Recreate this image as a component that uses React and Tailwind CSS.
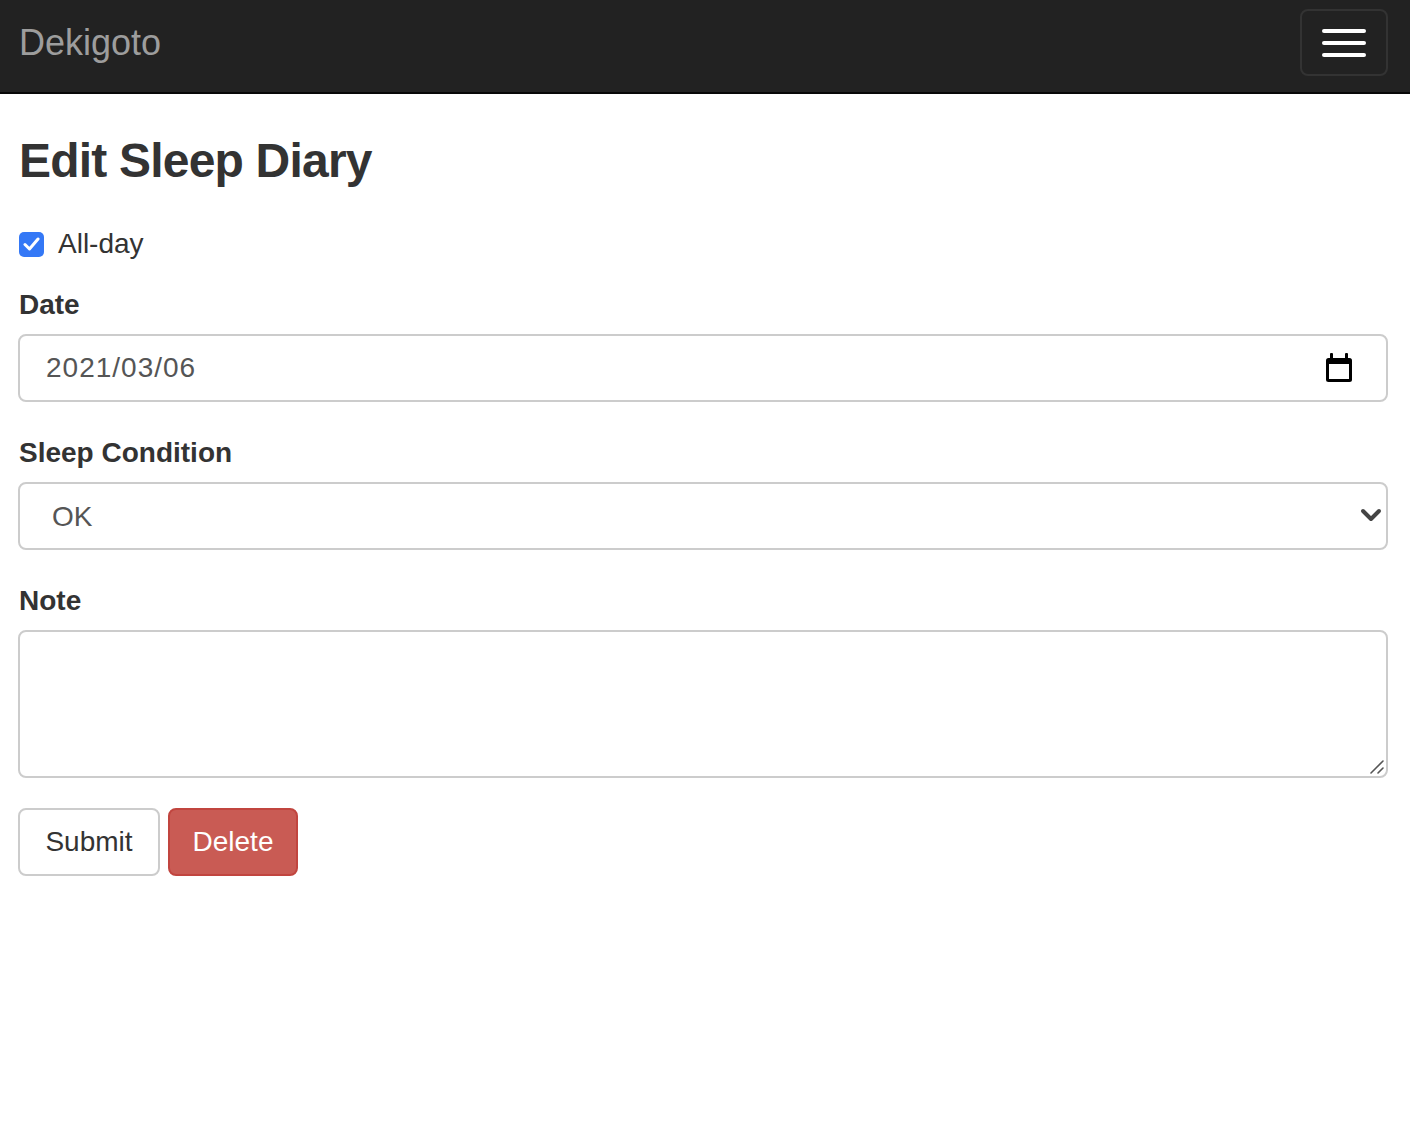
import { useState } from 'react';

const font = { fontFamily: '"Liberation Sans", Arial, Helvetica, sans-serif' };

function CalendarIcon() {
  return (
    <svg width="28" height="30" viewBox="0 0 28 30" className="shrink-0">
      <rect x="1" y="5" width="26" height="24" rx="2.5" fill="#000" />
      <rect x="4" y="11" width="20" height="15" fill="#fff" />
      <rect x="5" y="0" width="3" height="7" rx="1" fill="#000" />
      <rect x="20" y="0" width="3" height="7" rx="1" fill="#000" />
    </svg>
  );
}

function Chevron() {
  return (
    <svg width="22" height="16" viewBox="0 0 22 16">
      <path d="M3 4 L11 12 L19 4" fill="none" stroke="#444" strokeWidth="4" strokeLinecap="round" strokeLinejoin="round" />
    </svg>
  );
}

export default function App() {
  const [allDay, setAllDay] = useState(true);
  const [cond, setCond] = useState('OK');
  const [note, setNote] = useState('');

  return (
    <div className="min-h-[1130px] bg-white text-[#333]" style={font}>
      {/* Navbar */}
      <nav className="h-[94px] bg-[#222] border-b-2 border-[#080808] flex items-center justify-between pl-[19px] pr-[22px]">
        <div className="text-[36px] leading-none text-[#9d9d9d] -mt-[6px]">Dekigoto</div>
        <button className="w-[88px] h-[67px] border-2 border-[#333] rounded-[8px] flex flex-col items-center justify-center gap-[8px] -mt-[7px]">
          <span className="block w-[44px] h-[4px] rounded-[2px] bg-white" />
          <span className="block w-[44px] h-[4px] rounded-[2px] bg-white" />
          <span className="block w-[44px] h-[4px] rounded-[2px] bg-white" />
        </button>
      </nav>

      <div className="pl-[18px] pr-[22px]">
        <h3 className="mt-[40px] mb-[37px] pl-[1px] text-[48px] leading-[53px] font-bold tracking-[-0.8px]">Edit Sleep Diary</h3>

        {/* All-day */}
        <label className="flex items-center h-[40px] text-[28px] leading-[40px] cursor-pointer">
          <span
            onClick={(e) => { e.preventDefault(); setAllDay(v => !v); }}
            className={`ml-[1px] w-[25px] h-[25px] rounded-[5px] flex items-center justify-center ${allDay ? 'bg-[#3478f6]' : 'border-2 border-[#999] bg-white'}`}
          >
            {allDay && (
              <svg width="17" height="14" viewBox="0 0 17 14">
                <path d="M2 7.5 L6.5 12 L15 2" fill="none" stroke="#fff" strokeWidth="3" strokeLinecap="round" strokeLinejoin="round" />
              </svg>
            )}
          </span>
          <span className="ml-[14px]">All-day</span>
        </label>

        {/* Date */}
        <div className="mt-[21px]">
          <div className="pl-[1px] text-[28px] leading-[40px] font-bold mb-[9px]">Date</div>
          <div className="h-[68px] border-2 border-[#ccc] rounded-[8px] flex items-center justify-between pl-[26px] pr-[33px]">
            <span className="text-[28px] text-[#555] tracking-[1px]">2021/03/06</span>
            <CalendarIcon />
          </div>
        </div>

        {/* Sleep Condition */}
        <div className="mt-[31px]">
          <div className="pl-[1px] text-[28px] leading-[40px] font-bold mb-[9px]">Sleep Condition</div>
          <div className="relative">
            <select
              value={cond}
              onChange={e => setCond(e.target.value)}
              className="appearance-none w-full h-[68px] border-2 border-[#ccc] rounded-[8px] bg-white pl-[32px] pt-[2px] text-[28px] text-[#555] outline-none"
              style={font}
            >
              <option>Good</option>
              <option>OK</option>
              <option>Bad</option>
            </select>
            <span className="absolute right-[6px] top-[25px] pointer-events-none">
              <Chevron />
            </span>
          </div>
        </div>

        {/* Note */}
        <div className="mt-[31px]">
          <div className="pl-[1px] text-[28px] leading-[40px] font-bold mb-[9px]">Note</div>
          <div className="relative">
            <textarea
              value={note}
              onChange={e => setNote(e.target.value)}
              className="block w-full h-[148px] border-2 border-[#ccc] rounded-[8px] px-[24px] py-[12px] text-[28px] text-[#555] outline-none resize-none"
              style={font}
            />
            <svg width="16" height="16" viewBox="0 0 16 16" className="absolute right-[3px] bottom-[3px] pointer-events-none">
              <path d="M2 14 L14 2 M9 14 L14 9" stroke="#555" strokeWidth="1.6" strokeLinecap="round" />
            </svg>
          </div>
        </div>

        {/* Buttons */}
        <div className="mt-[30px] flex gap-[8px]">
          <button className="w-[142px] h-[68px] border-2 border-[#ccc] rounded-[8px] bg-white text-[28px] text-[#333]" style={font}>Submit</button>
          <button className="w-[130px] h-[68px] border-2 border-[#c1453f] rounded-[8px] bg-[#c95b54] text-[28px] text-white" style={font}>Delete</button>
        </div>
      </div>
    </div>
  );
}
